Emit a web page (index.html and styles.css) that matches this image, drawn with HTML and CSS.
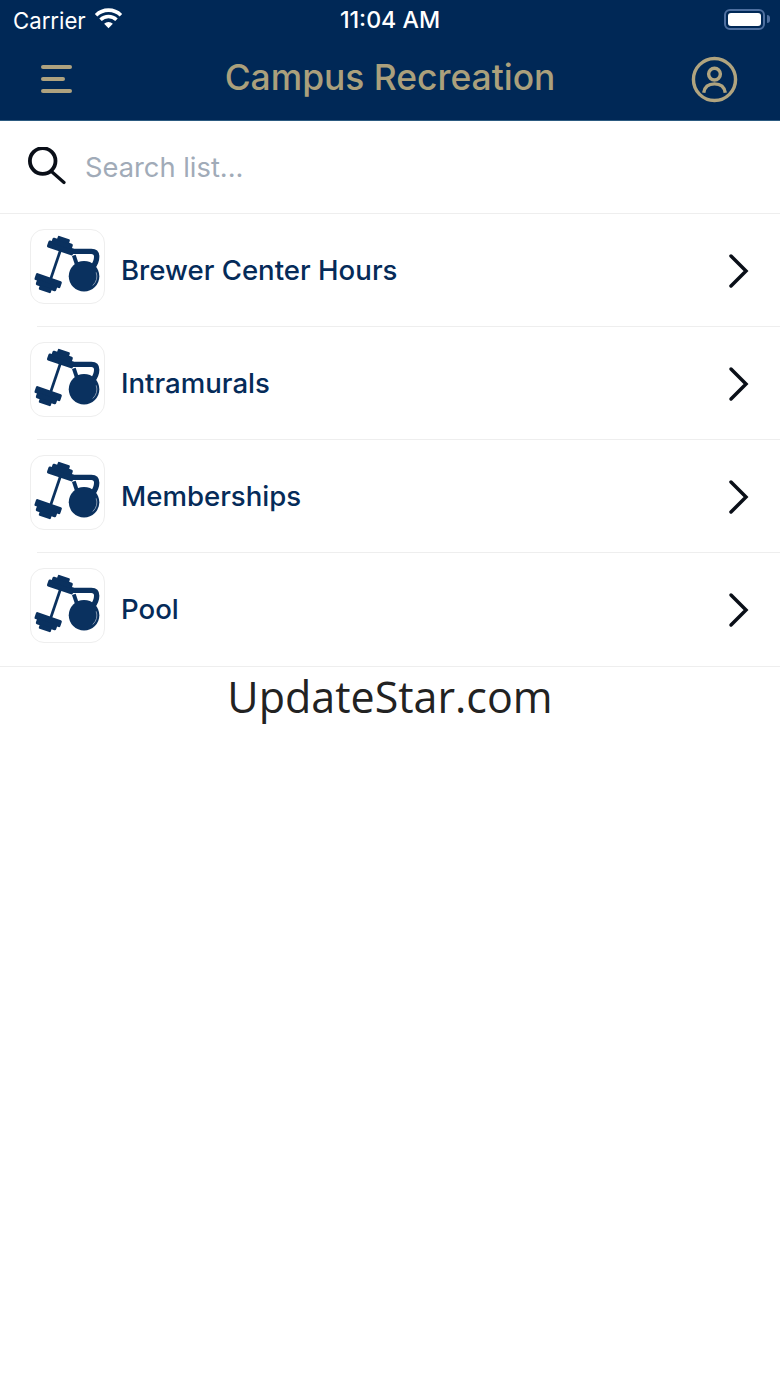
FILE: index.html
```html
<!DOCTYPE html>
<html lang="en">
<head>
<meta charset="utf-8">
<title>Campus Recreation</title>
<link rel="stylesheet" href="styles.css">
</head>
<body>
<svg class="sprite" width="0" height="0" aria-hidden="true">
  <symbol id="gym" viewBox="0 0 75 75">
    <g transform="translate(0 1) rotate(19 31.7 16)">
      <rect x="17" y="14" width="28" height="7.500" rx="1.500"/>
      <rect x="20" y="10" width="22" height="6" rx="1.500"/>
      <rect x="24.500" y="6.500" width="13" height="5" rx="1.200"/>
    </g>
    <path class="gym-bar" d="M30.500 20 19 54"/>
    <g transform="translate(-2 1) rotate(19 18.3 54.3)">
      <rect x="4.500" y="47" width="28" height="7.500" rx="1.500"/>
      <rect x="7.500" y="53" width="22" height="6" rx="1.500"/>
      <rect x="12" y="57.500" width="13" height="5" rx="1.200"/>
    </g>
    <path class="gym-handle" d="M43 22H62Q67.500 22 67.500 27.500Q67.500 33 63 39"/>
    <path class="gym-leg" d="M44 26 47 35"/>
    <circle cx="54.500" cy="47.500" r="15.700"/>
    <path class="gym-shine" d="M67 43.500A13.500 13.500 0 0 1 63.500 57"/>
  </symbol>
  <symbol id="chev" viewBox="0 0 24 36">
    <path d="M4 3 19 18 4 33"/>
  </symbol>
</svg>

<header class="top">
  <div class="status">
    <div class="status-left">
      <span>Carrier</span>
      <svg class="wifi" viewBox="0 0 28 20"><path d="M14 19.500 9.800 15a6 6 0 0 1 8.400 0Z"/><path class="wifi-arc" d="M6.300 11.300a11 11 0 0 1 15.400 0"/><path class="wifi-arc" d="M2 6.800a17.200 17.200 0 0 1 24 0"/></svg>
    </div>
    <span class="clock">11:04 AM</span>
    <div class="status-right">
      <span class="battery"><span class="charge"></span></span><span class="nub"></span>
    </div>
  </div>
  <nav class="nav">
    <div class="burger"><i></i><i class="short"></i><i></i></div>
    <h1 class="title">Campus Recreation</h1>
    <svg class="user" viewBox="0 0 48 48"><circle cx="24" cy="24" r="21.500"/><circle cx="24" cy="18.500" r="6"/><path d="M13 37.500C14 31 18.500 28.500 24 28.500S34 31 35 37.500"/></svg>
  </nav>
</header>

<div class="search">
  <svg class="lens" viewBox="0 0 38 38"><circle cx="14.700" cy="14" r="12.800"/><path class="lens-handle" d="M23.500 24.500 36 35.500"/></svg>
  <span class="placeholder">Search list...</span>
</div>

<ul class="list">
  <li class="row"><span class="tile"><svg class="gym"><use href="#gym"/></svg></span><span class="label">Brewer Center Hours</span><svg class="chev"><use href="#chev"/></svg></li>
  <li class="row"><span class="tile"><svg class="gym"><use href="#gym"/></svg></span><span class="label">Intramurals</span><svg class="chev"><use href="#chev"/></svg></li>
  <li class="row"><span class="tile"><svg class="gym"><use href="#gym"/></svg></span><span class="label">Memberships</span><svg class="chev"><use href="#chev"/></svg></li>
  <li class="row"><span class="tile"><svg class="gym"><use href="#gym"/></svg></span><span class="label">Pool</span><svg class="chev"><use href="#chev"/></svg></li>
</ul>

<p class="mark">UpdateStar.com</p>
</body>
</html>
```
FILE: styles.css
```css
* { box-sizing: border-box; }
html, body { margin: 0; padding: 0; }
body {
  width: 780px;
  height: 1387px;
  background: #fff;
  font-family: Inter, "Liberation Sans", sans-serif;
  overflow: hidden;
}
.sprite { position: absolute; }

.top {
  height: 121px;
  background: #002856;
  border-bottom: 1px solid #2c5a80;
}
.status {
  height: 40px;
  padding: 0 10px 0 13px;
  display: flex;
  align-items: center;
  justify-content: space-between;
  color: #fff;
  font-size: 22.200px;
  position: relative;
}
.status-left { display: flex; align-items: center; gap: 8px; }
.wifi { width: 29px; height: 21px; margin-top: -4px; fill: #fff; }
.wifi-arc { fill: none; stroke: #fff; stroke-width: 3.400; }
.clock {
  position: absolute;
  left: 0;
  right: 0;
  text-align: center;
  font-size: 23.200px;
  font-weight: 500;
}
.status-right { display: flex; align-items: center; gap: 2px; margin-top: -2px; }
.battery {
  width: 41px;
  height: 21px;
  border: 2px solid #4e6f9f;
  border-radius: 6px;
  padding: 2px;
  display: block;
}
.charge { display: block; width: 100%; height: 100%; background: #fff; border-radius: 3px; }
.nub { width: 3px; height: 8px; background: #4e6f9f; border-radius: 0 3px 3px 0; }

.nav {
  height: 80px;
  padding: 0 42px 0 41px;
  display: flex;
  align-items: center;
  justify-content: space-between;
  position: relative;
}
.burger { width: 31px; display: flex; flex-direction: column; gap: 8.500px; margin-top: -2px; }
.burger i { display: block; height: 3.500px; background: #aea27f; border-radius: 2px; }
.burger .short { width: 24px; }
.title {
  position: absolute;
  left: 0;
  right: 0;
  top: 16px;
  margin: 0;
  text-align: center;
  font-size: 35.400px;
  line-height: 44px;
  font-weight: 500;
  color: #aba07c;
}
.user { width: 47px; height: 47px; margin-top: -2px; fill: none; stroke: #b0a47f; stroke-width: 3.500; }

.search {
  height: 93px;
  display: flex;
  align-items: center;
  padding-left: 28px;
  gap: 19px;
  border-bottom: 1px solid #eeeeee;
}
.lens { width: 38px; height: 38px; fill: none; stroke: #0a0f18; stroke-width: 3.800; stroke-linecap: round; margin-top: -2px; }
.lens-handle { stroke-width: 3.200; }
.placeholder { font-size: 27.300px; color: #a1abb8; }

.list { list-style: none; margin: 0; padding: 0; }
.row {
  height: 113px;
  padding: 0 29px 0 30px;
  display: flex;
  align-items: center;
  position: relative;
}
.row:not(:last-child)::after {
  content: "";
  position: absolute;
  left: 37px;
  right: 0;
  bottom: 0;
  height: 1px;
  background: #eeeeee;
}
.row:last-child { height: 114px; border-bottom: 1px solid #eeeeee; }
.tile {
  width: 75px;
  height: 75px;
  border: 1px solid #eeeeee;
  border-radius: 14px;
  margin-top: -8px;
  flex: none;
}
.gym { display: block; width: 73px; height: 73px; fill: #0a315f; }
.gym-bar, .gym-handle, .gym-leg { fill: none; stroke: #0a315f; }
.gym-bar { stroke-width: 2.800; }
.gym-handle { stroke-width: 5.500; }
.gym-leg { stroke-width: 4; }
.gym-shine { fill: none; stroke: #b9c4d2; stroke-width: .7; }
.label {
  margin-left: 16px;
  margin-top: -2px;
  flex: 1;
  font-size: 27.600px;
  font-weight: 500;
  color: #052b59;
}
.chev { width: 24px; height: 36px; fill: none; stroke: #0a0f18; stroke-width: 3.500; stroke-linecap: round; }

.mark {
  margin: 0;
  padding-top: 2px;
  text-align: center;
  font-family: "Open Sans", "Noto Sans", sans-serif;
  font-size: 43px;
  line-height: 56px;
  color: #222;
}
```
